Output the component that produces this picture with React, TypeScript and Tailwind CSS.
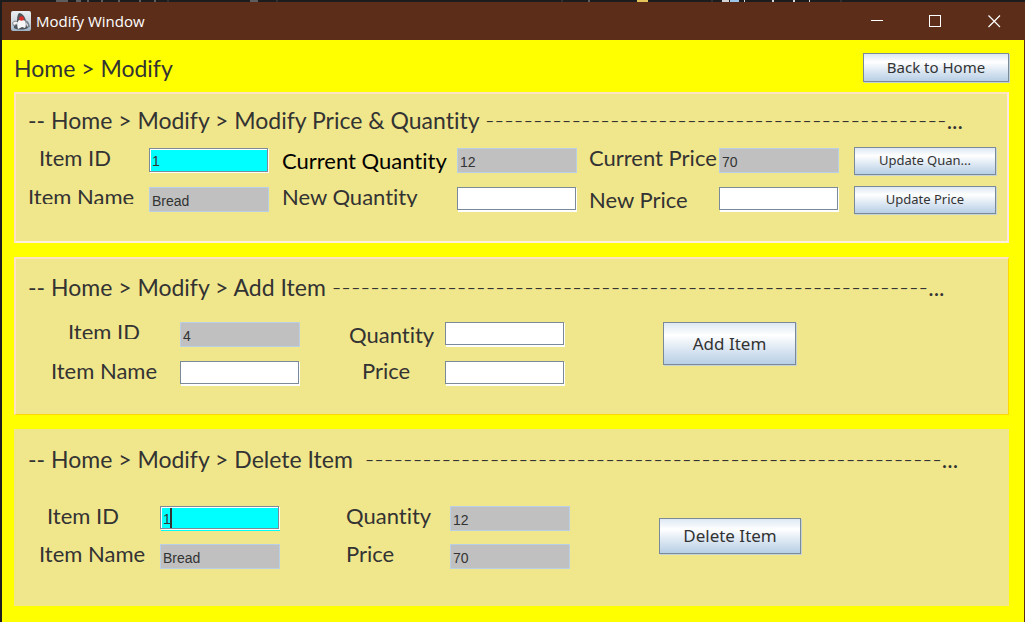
import { useId } from "react";
import type { ReactNode } from "react";

type Tone = "plain" | "disabled" | "active" | "focused";

const toneClasses: Record<Tone, string> = {
  plain: "h-[23px] w-[119px] mr-px mb-0.5 border-[#7a8a99] bg-white shadow-[1px_1px_0_#fff,1px_2px_0_#fff]",
  disabled: "h-[25px] w-[120px] border-[#b8cfe5] bg-[#c0c0c0]",
  active:
    "h-6 w-[119px] mr-px mb-px border-[#7a8a99] bg-[#00ffff] shadow-[1px_1px_0_#fff,inset_1px_1px_0_#fff]",
  focused:
    "h-[23px] w-[119px] mr-px mb-0.5 border-[#7a8a99] bg-[#00ffff] shadow-[1px_1px_0_#fff,1px_2px_0_#0ff,inset_1px_1px_0_#fff]",
};

interface FieldProps {
  label: string;
  value?: string;
  tone?: Tone;
  labelClass?: string;
}

function Field({ label, value = "", tone = "plain", labelClass = "leading-5" }: FieldProps) {
  const id = useId();
  return (
    <>
      <label htmlFor={id} className={`block whitespace-nowrap text-[22px] ${labelClass}`}>
        {label}
      </label>
      <div className="relative">
        <input
          id={id}
          type="text"
          defaultValue={value}
          disabled={tone === "disabled"}
          className={`block rounded-none border pt-0.5 pl-0.5 font-['Liberation_Sans',sans-serif] text-sm text-[#333333] outline-none ${toneClasses[tone]}`}
        />
        {tone === "focused" && <span className="absolute top-0.5 left-2.5 h-5 w-0.5 bg-[#333333]" />}
      </div>
    </>
  );
}

function MetalButton({ children, className }: { children: ReactNode; className: string }) {
  return (
    <button
      type="button"
      className={`border border-[#7a8a99] bg-[linear-gradient(#dde8f3,#ffffff_30%,#dde8f3_62%,#b8cfe5)] text-center whitespace-nowrap shadow-[1px_1px_0_#c5d3d6] ${className}`}
    >
      {children}
    </button>
  );
}

function PanelTitle({ text, dashes }: { text: string; dashes: number }) {
  return (
    <h2 className="flex h-7 items-baseline text-[23px] leading-[26px] whitespace-pre">
      <span>{text}</span>
      <span className="text-[26px] leading-[26px] font-light">{"-".repeat(dashes)}</span>
      <span>...</span>
    </h2>
  );
}

function AppIcon() {
  return (
    <svg width="20" height="20" viewBox="0 0 20 20" aria-hidden="true">
      <defs>
        <linearGradient id="tile" x1="0" y1="0" x2="0" y2="1">
          <stop offset="0" stopColor="#e9eff4" />
          <stop offset="0.55" stopColor="#cfd8df" />
          <stop offset="1" stopColor="#9db4c8" />
        </linearGradient>
      </defs>
      <rect width="20" height="20" rx="2" fill="url(#tile)" />
      <path d="M1 12 C3 9 5 9 7 10 L6 16 L2 15Z" fill="#8b9298" />
      <path d="M14 10 C17 9 18 12 19 16 L15 17Z" fill="#79838b" />
      <path d="M3 15 L8 13 L15 14 L17 17 C13 19 6 19 3 17Z" fill="#4c545b" />
      <path d="M7 9 C9 7 13 8 14 10 C15 13 15 16 14 17 L11 16 L7 18 C6 15 6 12 7 9Z" fill="#f7f7f7" />
      <path d="M8 2 C11 2 14 5 15 10 L12 9 L8 9 L6 12 C6 8 6 4 8 2Z" fill="#50555a" />
      <path d="M2 12 C4 10 6 11 7 12 L5 13 L3 14Z" fill="#f4f4f4" />
      <path d="M15 11 L17 14 L16 16Z" fill="#f4f4f4" />
      <ellipse cx="10.500" cy="7.500" rx="2.500" ry="2.300" fill="#dc2f2a" />
    </svg>
  );
}

function DesktopStrip() {
  return (
    <svg className="h-0.5 w-full" preserveAspectRatio="xMinYMin slice" viewBox="0 0 1025 2" aria-hidden="true">
      <path d="M56 1h12M76 1h5M87 1h2M101 1h2M118 1h2M139 1h2M154 1h2M250 1h8M588 1h2" stroke="#a0a0a0" strokeWidth="1" />
      <path d="M168 0v2M277 0v2M562 0v2M712 0v2M841 0v2" stroke="#454545" strokeWidth="1" />
      <path d="M637 1h11" stroke="#e5c45a" strokeWidth="2" />
      <path d="M722 1h7" stroke="#d4d4d4" strokeWidth="2" />
      <path d="M730 1h9" stroke="#9cc5e8" strokeWidth="2" />
      <path d="M744 1h1M772 1h2M793 1h2M809 1h1" stroke="#d8d8d8" strokeWidth="2" />
    </svg>
  );
}

export default function App() {
  return (
    <div className="flex min-h-screen flex-col bg-[#1c1c1e] font-[Lato,sans-serif] text-[#333333] [font-variant-ligatures:none]">
      <DesktopStrip />
      <div className="ml-0.5 flex flex-1 flex-col border-r border-[#5c2e1a] bg-[#ffff00]">
        <header className="flex h-[38px] items-center bg-[#5c2e1a] pl-[9px] text-white">
          <AppIcon />
          <h1 className="ml-[5px] flex-1 font-['Open_Sans',sans-serif] text-[15px] leading-5">Modify Window</h1>
          <div className="mr-[23px] flex items-center gap-[46px]">
            <button type="button" aria-label="Minimize">
              <svg width="13" height="13" viewBox="0 0 13 13" stroke="#fff" shapeRendering="crispEdges">
                <path d="M1 5.5h12" />
              </svg>
            </button>
            <button type="button" aria-label="Maximize">
              <svg width="13" height="13" viewBox="0 0 13 13" fill="none" stroke="#fff" shapeRendering="crispEdges">
                <rect x="0.5" y="0.5" width="11" height="11" />
              </svg>
            </button>
            <button type="button" aria-label="Close">
              <svg width="13" height="13" viewBox="0 0 13 13" stroke="#fff" strokeWidth="1.2">
                <path d="M0.5 0.5l11.500 11.500M12 0.5l-11.500 11.500" />
              </svg>
            </button>
          </div>
        </header>

        <main className="flex flex-col pr-[15px] pl-3">
          <div className="flex h-[52px] items-start justify-between pt-[13px]">
            <p className="pt-0.5 text-[23px] leading-[26px]">Home &gt; Modify</p>
            <MetalButton className="h-[29px] w-[146px] font-['Noto_Sans',sans-serif] text-[15px]">Back to Home</MetalButton>
          </div>

          <section className="h-[151px] border-2 border-[#ffe4c4] border-r-[#ffe8e0] border-b-[#ffefdf] bg-[#f0e68c] px-3 pt-3">
            <PanelTitle text="-- Home > Modify > Modify Price & Quantity " dashes={48} />
            <div className="mt-3.5 flex items-start">
              <div className="grid auto-rows-[25px] grid-cols-[121px_120px_188px_120px_142px_120px] gap-y-3.5">
                <Field label="Item ID" value="1" tone="active" labelClass="pl-[11px] leading-5" />
                <Field label="Current Quantity" value="12" tone="disabled" labelClass="pl-[13px] leading-[26px] text-black" />
                <Field label="Current Price" value="70" tone="disabled" labelClass="pl-3 leading-5" />
                <Field label="Item Name" value="Bread" tone="disabled" labelClass="h-[17px] overflow-hidden leading-5" />
                <Field label="New Quantity" labelClass="h-5 overflow-hidden pl-[13px] leading-5" />
                <Field label="New Price" labelClass="pl-3 leading-[26px]" />
              </div>
              <div className="-mt-px ml-[15px] flex flex-col gap-[11px]">
                <MetalButton className="h-7 w-[142px] font-['Noto_Sans',sans-serif] text-[13px]">Update Quan...</MetalButton>
                <MetalButton className="h-7 w-[142px] font-['Noto_Sans',sans-serif] text-[13px]">Update Price</MetalButton>
              </div>
            </div>
          </section>

          <section className="mt-3.5 h-[158px] border-t-2 border-r border-b border-l-2 border-[#ffe4c4] border-r-[#ffd700] border-b-[#ffd700] bg-[#f0e68c] px-3 pt-3.5">
            <PanelTitle text="-- Home > Modify > Add Item " dashes={62} />
            <div className="mt-[21px] flex items-start">
              <div className="grid auto-rows-[25px] grid-cols-[152px_120px_145px_120px] gap-y-3.5">
                <Field label="Item ID" value="4" tone="disabled" labelClass="h-[17px] overflow-hidden text-center leading-5" />
                <Field label="Quantity" labelClass="pl-[49px] leading-[26px]" />
                <Field label="Item Name" labelClass="text-center leading-5" />
                <Field label="Price" labelClass="pl-[62px] leading-5" />
              </div>
              <MetalButton className="ml-[98px] h-[43px] w-[133px] font-['Noto_Sans',sans-serif] text-[17px]">Add Item</MetalButton>
            </div>
          </section>

          <section className="mt-3.5 h-[177px] bg-[#f0e68c] px-3.5 pt-4">
            <PanelTitle text="-- Home > Modify > Delete Item  " dashes={60} />
            <div className="mt-[33px] flex items-start">
              <div className="grid auto-rows-[25px] grid-cols-[132px_120px_170px_120px] gap-y-[13px]">
                <Field label="Item ID" value="1" tone="focused" labelClass="pl-[19px] leading-5" />
                <Field label="Quantity" value="12" tone="disabled" labelClass="pl-[66px] leading-5" />
                <Field label="Item Name" value="Bread" tone="disabled" labelClass="pl-[11px] leading-5" />
                <Field label="Price" value="70" tone="disabled" labelClass="pl-[66px] leading-5" />
              </div>
              <MetalButton className="mt-3 ml-[89px] h-9 w-[142px] font-['Noto_Sans',sans-serif] text-[17px]">Delete Item</MetalButton>
            </div>
          </section>
        </main>
      </div>
    </div>
  );
}
